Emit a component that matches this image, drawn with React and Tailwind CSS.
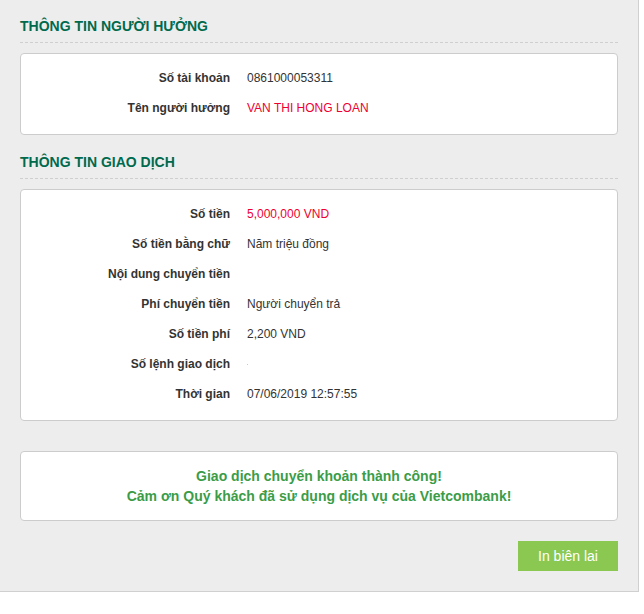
const beneficiary = [
  { label: 'Số tài khoản', value: '0861000053311' },
  { label: 'Tên người hưởng', value: 'VAN THI HONG LOAN', red: true },
];

const transaction = [
  { label: 'Số tiền', value: '5,000,000 VND', red: true },
  { label: 'Số tiền bằng chữ', value: 'Năm triệu đồng' },
  { label: 'Nội dung chuyển tiền', value: '' },
  { label: 'Phí chuyển tiền', value: 'Người chuyển trả' },
  { label: 'Số tiền phí', value: '2,200 VND' },
  { label: 'Số lệnh giao dịch', value: '', dot: true },
  { label: 'Thời gian', value: '07/06/2019 12:57:55' },
];

const Heading = ({ children, className = '' }) => (
  <div className={`pb-[6px] border-b border-dashed border-[#cfcfcf] ${className}`}>
    <h2 className="text-[14px] leading-[20px] font-bold text-[#006a4d] uppercase">{children}</h2>
  </div>
);

const InfoBox = ({ rows }) => (
  <div className="mt-[10px] bg-white border border-[#cccccc] rounded-[4px] pt-[9px] pb-[11px]">
    {rows.map((row) => (
      <div key={row.label} className="flex h-[30px] items-center text-[12px]">
        <div className="w-[209px] shrink-0 text-right font-bold text-[#333333]">{row.label}</div>
        <div className={`pl-[17px] ${row.red ? 'text-[#ee0033]' : 'text-[#333333]'}`}>
          {row.dot ? <span className="inline-block w-[1px] h-[1px] bg-[#e2c79a] align-middle" /> : row.value}
        </div>
      </div>
    ))}
  </div>
);

const App = () => {
  return (
    <div className="bg-white min-h-screen" style={{ fontFamily: '"Liberation Sans", Arial, sans-serif' }}>
      <div className="w-[639px] h-[592px] bg-[#ededed] border-r border-b border-[#d0d0d0] pl-[20px] pr-[20px] pt-[16px]">
        <Heading>Thông tin người hưởng</Heading>
        <InfoBox rows={beneficiary} />

        <Heading className="mt-[17px]">Thông tin giao dịch</Heading>
        <InfoBox rows={transaction} />

        <div className="mt-[30px] bg-white border border-[#cccccc] rounded-[4px] py-[14px] text-center text-[14px] leading-[20px] font-bold text-[#3b9c48]">
          <p>Giao dịch chuyển khoản thành công!</p>
          <p>Cảm ơn Quý khách đã sử dụng dịch vụ của Vietcombank!</p>
        </div>

        <div className="flex justify-end mt-[20px]">
          <button className="w-[100px] h-[30px] bg-[#8bc852] text-white text-[14px]">In biên lai</button>
        </div>
      </div>
    </div>
  );
};

export default App;
